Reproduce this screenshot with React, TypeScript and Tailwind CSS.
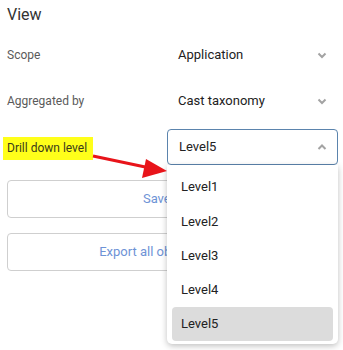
import React from "react";

const levels = ["Level1", "Level2", "Level3", "Level4", "Level5"];

function Chevron({ up }: { up?: boolean }) {
  return (
    <svg width="12" height="12" viewBox="0 0 12 12" className="text-[#a3a3a3]">
      <path
        d={up ? "M2.5 8 L6 4.5 L9.5 8" : "M2.5 4.5 L6 8 L9.5 4.5"}
        fill="none"
        stroke="currentColor"
        strokeWidth="2"
      />
    </svg>
  );
}

function Row({ label, value }: { label: string; value: string }) {
  return (
    <div className="flex h-[36px] items-center">
      <div className="w-[167px] pl-[7px] text-[12px] text-[#5a5a5a]">{label}</div>
      <div className="flex w-[171px] items-center justify-between pl-[11px] pr-[10px] text-[13px] text-[#222]">
        <span>{value}</span>
        <Chevron />
      </div>
    </div>
  );
}

export default function App() {
  const [open] = React.useState(true);
  const [level, setLevel] = React.useState("Level5");

  return (
    <div className="relative h-[350px] w-[343px] overflow-hidden bg-white font-['Roboto',sans-serif]">
      <div className="pl-[7px] pt-[5px] text-[16px] leading-[20px] text-[#333]">View</div>

      <div className="mt-[12px] flex flex-col gap-[10px]">
        <Row label="Scope" value="Application" />
        <Row label="Aggregated by" value="Cast taxonomy" />

        {/* Drill down */}
        <div className="flex h-[36px] items-center">
          <div className="w-[167px] pl-[3px]">
            <span className="inline-block bg-[#ffff1a] py-[4px] pl-[4px] pr-[6px] text-[12px] leading-[15px] text-[#3a3a1a]">
              Drill down level
            </span>
          </div>
          <div className="flex h-[36px] w-[171px] items-center justify-between rounded-[4px] border border-[#5b84ad] pl-[11px] pr-[9px] text-[13px] text-[#222]">
            <span>{level}</span>
            <Chevron up />
          </div>
        </div>
      </div>

      <div className="mt-[15px] flex flex-col gap-[15px] px-[7px]">
        <button className="h-[38px] w-full rounded-[4px] border-[1.5px] border-[#cfcfcf] text-[13px] text-[#6e93d6]">
          Save view
        </button>
        <button className="h-[38px] w-full rounded-[4px] border-[1.5px] border-[#cfcfcf] text-[13px] text-[#6e93d6]">
          Export all objects as CSV
        </button>
      </div>

      {open && (
        <div className="absolute left-[167px] top-[165px] w-[171px] rounded-b-[5px] bg-white px-[5px] pb-[3px] pt-[5px] shadow-[0_2px_6px_rgba(0,0,0,0.25)]">
          {levels.map((l) => (
            <div
              key={l}
              onClick={() => setLevel(l)}
              className={
                "flex h-[34.2px] items-center rounded-[4px] pl-[9px] text-[13px] text-[#222] " +
                (l === level ? "bg-[#dcdcdc]" : "")
              }
            >
              {l}
            </div>
          ))}
        </div>
      )}

      {/* red arrow */}
      <svg className="absolute left-0 top-0" width="343" height="350" viewBox="0 0 343 350">
        <line x1="93" y1="156" x2="150" y2="168" stroke="#e8141a" strokeWidth="3" />
        <polygon points="146,159 142,178 167,171" fill="#e8141a" />
      </svg>
    </div>
  );
}
